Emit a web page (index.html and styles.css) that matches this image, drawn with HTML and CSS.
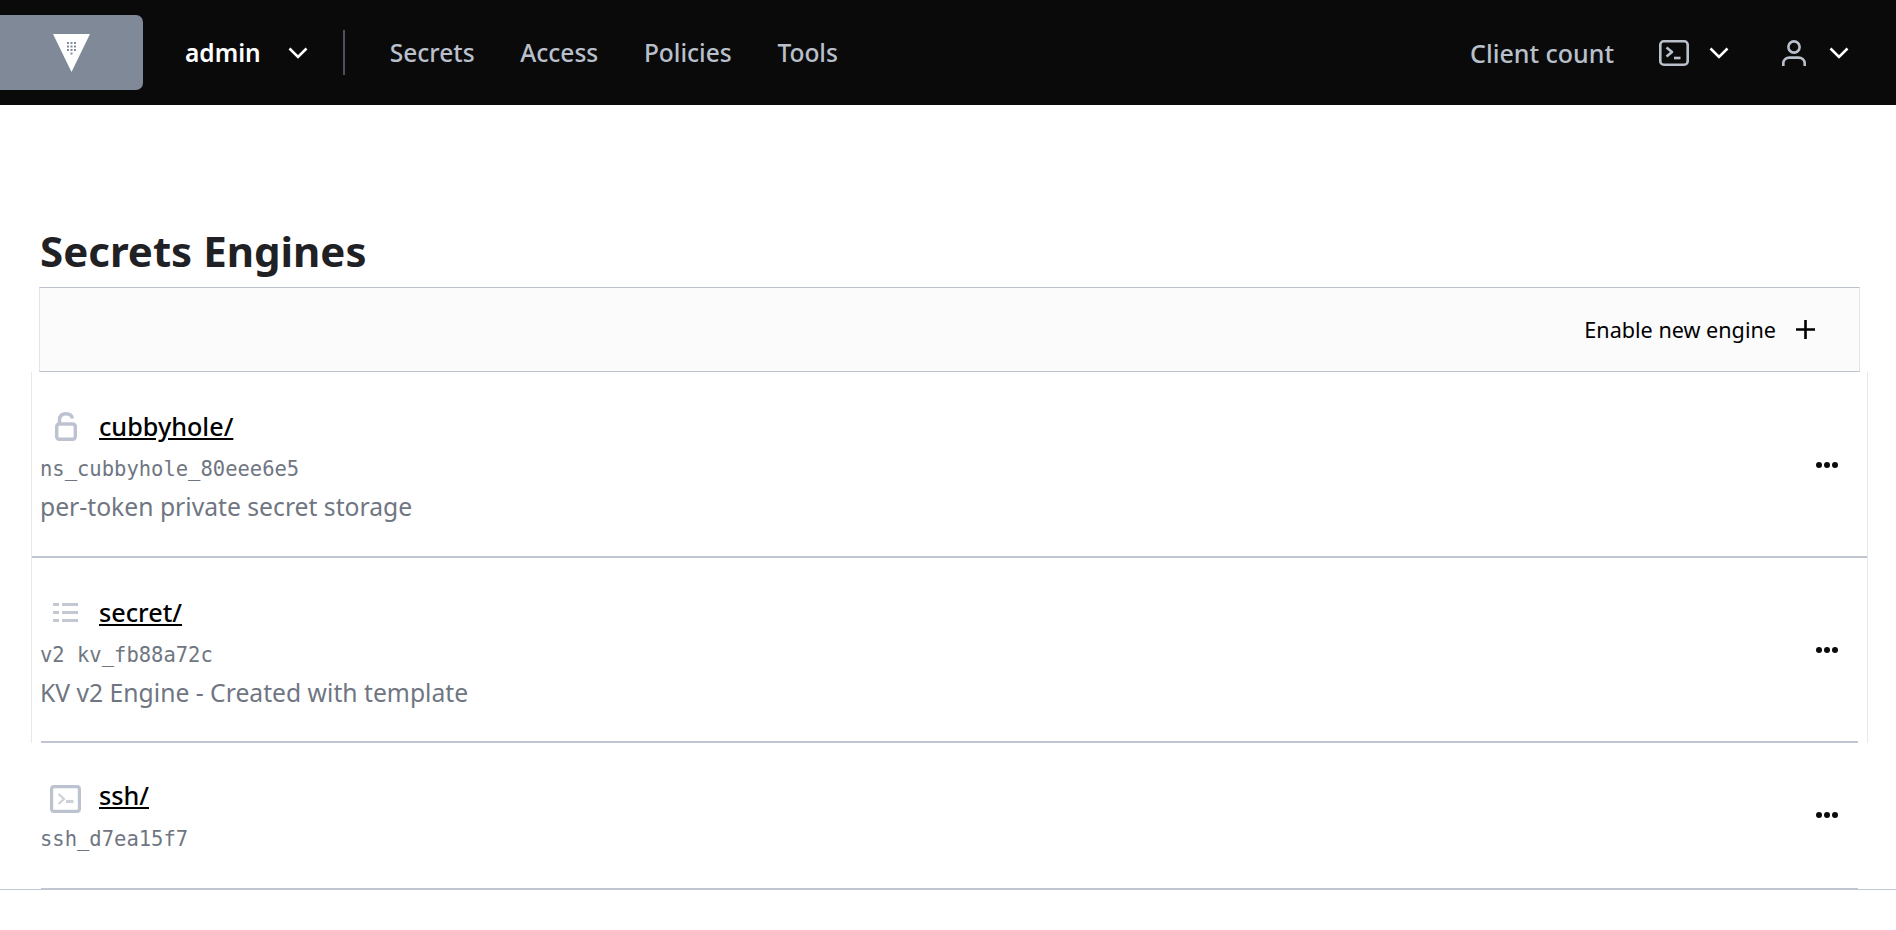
FILE: index.html
```html
<!DOCTYPE html>
<html lang="en">
<head>
  <meta charset="UTF-8">
  <title>Secrets Engines</title>
  <link rel="stylesheet" href="styles.css">
</head>
<body>
  <nav class="topbar">
    <a class="logo">
      <svg width="37" height="38" viewBox="0 0 37 38">
        <path d="M0 0H37L18.5 38Z" fill="#fff"/>
        <g fill="#838d9b">
          <rect x="14" y="8" width="2" height="2"/><rect x="17.5" y="8" width="2" height="2"/><rect x="21" y="8" width="2" height="2"/>
          <rect x="14" y="11.5" width="2" height="2"/><rect x="17.5" y="11.5" width="2" height="2"/><rect x="21" y="11.5" width="2" height="2"/>
          <rect x="14" y="15" width="2" height="2"/><rect x="17.5" y="15" width="2" height="2"/><rect x="21" y="15" width="2" height="2"/>
          <rect x="17.5" y="18.5" width="2" height="2"/>
        </g>
      </svg>
    </a>
    <div class="user-menu">
      <span class="user-name">admin</span>
      <svg class="chevron" width="20" height="12" viewBox="0 0 20 12"><path d="M1.5 1.5L10 10L18.5 1.5"/></svg>
    </div>
    <div class="nav-links">
      <a>Secrets</a>
      <a>Access</a>
      <a>Policies</a>
      <a>Tools</a>
    </div>
    <div class="nav-right">
      <a class="client-count">Client count</a>
      <div class="nav-tool">
        <svg width="30" height="26" viewBox="0 0 30 26" fill="none" stroke="#b9c0cc" stroke-width="2.6">
          <rect x="1.3" y="1.3" width="27.4" height="23.4" rx="3.5"/>
          <path d="M7.5 7.5L13 12L7.5 16.5" stroke-linejoin="round"/>
          <path d="M15 18H21.5"/>
        </svg>
        <svg class="chevron" width="20" height="12" viewBox="0 0 20 12"><path d="M1.5 1.5L10 10L18.5 1.5"/></svg>
      </div>
      <div class="nav-tool user">
        <svg width="24" height="26" viewBox="0 0 24 26" fill="none" stroke="#b9c0cc" stroke-width="2.6">
          <circle cx="12" cy="7" r="5.6"/>
          <path d="M1.3 26V23.5C1.3 20 4 17.6 7.5 17.6H16.5C20 17.6 22.7 20 22.7 23.5V26"/>
        </svg>
        <svg class="chevron" width="20" height="12" viewBox="0 0 20 12"><path d="M1.5 1.5L10 10L18.5 1.5"/></svg>
      </div>
    </div>
  </nav>

  <main class="page">
    <h1 class="page-title">Secrets Engines</h1>
    <div class="toolbar">
      <a class="toolbar-link">Enable new engine
        <svg width="19" height="19" viewBox="0 0 19 19" stroke="#000" stroke-width="2.6"><path d="M9.5 0V19M0 9.5H19"/></svg>
      </a>
    </div>

    <div class="engine-row card">
      <div class="engine-info">
        <div class="engine-title">
          <span class="engine-icon">
            <svg width="22" height="29" viewBox="0 0 22 29" fill="none" stroke="#bcc2cf" stroke-width="3.4">
              <rect x="1.7" y="12" width="18.6" height="15.3" rx="2.5"/>
              <path d="M4.5 11V8C4.5 4 7 1.7 11 1.7C14.5 1.7 16.8 3.4 17.4 6.5"/>
            </svg>
          </span>
          <a class="engine-name">cubbyhole/</a>
        </div>
        <code class="engine-path">ns_cubbyhole_80eee6e5</code>
        <div class="engine-desc">per-token private secret storage</div>
      </div>
      <div class="dots"><i></i><i></i><i></i></div>
    </div>

    <div class="engine-row card inset">
      <div class="engine-info">
        <div class="engine-title">
          <span class="engine-icon">
            <svg width="25" height="19" viewBox="0 0 25 19" fill="#c3c8d3">
              <rect x="0" y="0" width="6" height="3"/><rect x="9" y="0" width="16" height="3"/>
              <rect x="0" y="8" width="6" height="3"/><rect x="9" y="8" width="16" height="3"/>
              <rect x="0" y="16" width="6" height="3"/><rect x="9" y="16" width="16" height="3"/>
            </svg>
          </span>
          <a class="engine-name">secret/</a>
        </div>
        <code class="engine-path">v2 kv_fb88a72c</code>
        <div class="engine-desc">KV v2 Engine - Created with template</div>
      </div>
      <div class="dots"><i></i><i></i><i></i></div>
    </div>

    <div class="engine-row last">
      <div class="engine-info">
        <div class="engine-title">
          <span class="engine-icon low">
            <svg width="31" height="28" viewBox="0 0 31 28" fill="none" stroke="#bcc2cf" stroke-width="3.2">
              <rect x="1.6" y="1.6" width="27.8" height="24.8" rx="2.5"/>
              <path d="M8.5 9L14 14L8.5 19" stroke-width="2.2" stroke="#cdd1da"/>
              <path d="M16 16.5H23.5" stroke="#cdd1da"/>
            </svg>
          </span>
          <a class="engine-name">ssh/</a>
        </div>
        <code class="engine-path">ssh_d7ea15f7</code>
      </div>
      <div class="dots"><i></i><i></i><i></i></div>
    </div>
  </main>
</body>
</html>
```

FILE: styles.css
```css
html, body {
  margin: 0;
  padding: 0;
  background-color: #fff;
  font-family: "Noto Sans", sans-serif;
  overflow: hidden;
}

.topbar {
  display: flex;
  align-items: center;
  height: 105px;
  background-color: #0a0a0b;
  padding-right: 47px;
}

.logo {
  display: flex;
  align-items: center;
  justify-content: center;
  width: 143px;
  height: 75px;
  box-sizing: border-box;
  background-color: #7f8998;
  border-radius: 0 7px 7px 0;
  flex-shrink: 0;
}

.chevron {
  fill: none;
  stroke: #fff;
  stroke-width: 2.6;
}

.user-menu {
  display: flex;
  align-items: center;
  gap: 27px;
  margin-left: 42px;
  padding-right: 35px;
  height: 45px;
  border-right: 2px solid #4d525a;
}

.user-name {
  color: #fff;
  font-size: 24.5px;
  font-weight: 600;
}

.nav-links {
  display: flex;
  gap: 45.7px;
  margin-left: 45px;
}

.nav-links a,
.client-count {
  color: #b9c0cc;
  font-size: 24.5px;
  font-weight: 500;
}

.client-count {
  font-size: 25px;
  margin-right: 45px;
}

.nav-right {
  display: flex;
  align-items: center;
  margin-left: auto;
}

.nav-tool {
  display: flex;
  align-items: center;
  gap: 20px;
}

.nav-tool.user {
  gap: 23px;
  margin-left: 53px;
}

.page {
  height: 785px;
  padding: 0 36px 0 39px;
  box-shadow: inset 0 -1px 0 #c3c8d6;
}

.page-title {
  margin: 0;
  padding: 113px 0 0 1px;
  height: 69px;
  font-size: 42px;
  line-height: 65px;
  font-weight: 700;
  color: #1f2124;
}

.toolbar {
  display: flex;
  justify-content: flex-end;
  align-items: center;
  height: 83px;
  padding-right: 44px;
  background-color: #fbfbfc;
  border: 1px solid #e2e4ea;
  border-top-color: #bcc1d0;
  border-bottom-color: #bcc1d0;
}

.toolbar-link {
  display: flex;
  align-items: center;
  gap: 20px;
  font-size: 21.6px;
  color: #000;
}

.engine-row {
  display: flex;
  align-items: center;
  justify-content: space-between;
  box-sizing: border-box;
  height: 147px;
  padding: 0 22px 4px 1px;
  background: linear-gradient(#bfc5d1, #bfc5d1) no-repeat center bottom / calc(100% - 4px) 2px;
}

.engine-row.card {
  height: 186px;
  margin: 0 -8px;
  padding: 0 29px 0 8px;
  border-left: 1px solid #e6e8ee;
  border-right: 1px solid #e6e8ee;
  background-size: 100% 2px;
}

.engine-row.inset {
  height: 185px;
  padding-bottom: 2px;
  background-size: calc(100% - 18px) 2px;
}

.engine-info {
  align-self: flex-start;
  padding-top: 36px;
}

.last .engine-info {
  padding-top: 34px;
}

.engine-title {
  display: flex;
  align-items: center;
  height: 36px;
  margin-bottom: 8px;
}

.last .engine-title {
  margin-bottom: 9px;
}

.engine-icon {
  display: flex;
  justify-content: center;
  width: 51px;
  flex-shrink: 0;
}

.engine-icon.low {
  padding-top: 8px;
}

.engine-name {
  margin-left: 8px;
  font-size: 25.2px;
  font-weight: 500;
  color: #000;
  text-decoration: underline;
}

.engine-path {
  display: block;
  font-family: "DejaVu Sans Mono", monospace;
  font-size: 20.5px;
  line-height: 35px;
  color: #6f7682;
  white-space: pre;
}

.engine-desc {
  font-size: 24.7px;
  line-height: 40px;
  color: #6f7682;
}

.dots {
  display: flex;
  gap: 2px;
}

.dots i {
  display: block;
  width: 6px;
  height: 6px;
  border-radius: 50%;
  background-color: #0b0c0e;
}
```
